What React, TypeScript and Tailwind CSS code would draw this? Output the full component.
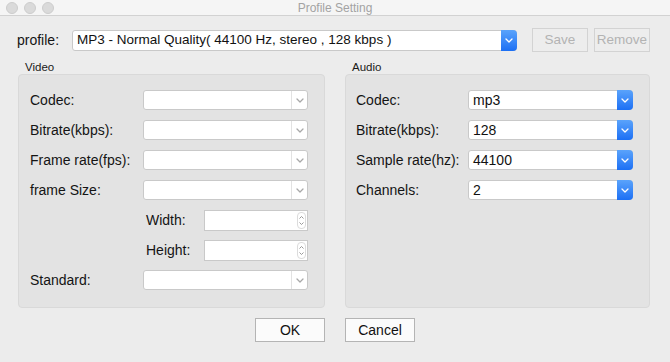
import React from 'react';

const FONT = { fontFamily: '"Liberation Sans", Arial, sans-serif' };

function Chevron({ color }: { color: string }) {
  return (
    <svg width="8" height="5" viewBox="0 0 8 5" fill="none">
      <polyline points="1,1 4,4 7,1" stroke={color} strokeWidth="1.3" strokeLinecap="round" strokeLinejoin="round" />
    </svg>
  );
}

function Select({ value, active, width }: { value?: string; active?: boolean; width: string }) {
  return (
    <div className={`${width} flex h-[20px] items-stretch rounded-[3px] border border-[#c9c9c9] bg-white`}>
      <div className="flex flex-1 items-center overflow-hidden pl-[4px] text-[14px] text-[#111]">{value}</div>
      {active ? (
        <div className="-my-px -mr-px flex w-[16px] items-center justify-center rounded-r-[4px] bg-gradient-to-b from-[#5aa3fb] to-[#1b6ff4]">
          <Chevron color="#ffffff" />
        </div>
      ) : (
        <div className="flex w-[16px] items-center justify-center border-l border-[#e2e2e2]">
          <Chevron color="#a8a8a8" />
        </div>
      )}
    </div>
  );
}

function Spin() {
  return (
    <div className="flex h-[21px] w-[104px] items-center justify-end border border-[#c9c9c9] bg-white pr-[1px]">
      <div className="flex h-[17px] w-[9px] flex-col items-center justify-center gap-[3px] rounded-[4px] border border-[#dcdcdc]">
        <svg width="5" height="3" viewBox="0 0 5 3" fill="none">
          <polyline points="0.5,2.5 2.5,0.5 4.5,2.5" stroke="#999" strokeWidth="1" />
        </svg>
        <svg width="5" height="3" viewBox="0 0 5 3" fill="none">
          <polyline points="0.5,0.5 2.5,2.5 4.5,0.5" stroke="#999" strokeWidth="1" />
        </svg>
      </div>
    </div>
  );
}

function Row({ label, children, labelWidth }: { label: string; children: React.ReactNode; labelWidth: string }) {
  return (
    <div className="flex h-[20px] items-center">
      <div className={`${labelWidth} text-[14px] text-[#141414]`}>{label}</div>
      {children}
    </div>
  );
}

export default function App() {
  return (
    <div className="flex h-[362px] w-[670px] flex-col overflow-hidden bg-[#ececec]" style={FONT}>
      {/* title bar */}
      <div className="grid h-[16px] grid-cols-[1fr_auto_1fr] items-center border-b border-[#d2d2d2] bg-[#f5f5f5]">
        <div className="flex gap-[6px] pl-[6px]">
          <span className="h-[12px] w-[12px] rounded-full border border-[#cdcdcd] bg-[#dadada]" />
          <span className="h-[12px] w-[12px] rounded-full border border-[#cdcdcd] bg-[#dadada]" />
          <span className="h-[12px] w-[12px] rounded-full border border-[#cdcdcd] bg-[#dadada]" />
        </div>
        <div className="text-[12px] leading-none text-[#a3a3a3]">Profile Setting</div>
        <div />
      </div>

      {/* profile row */}
      <div className="mt-[12px] flex h-[24px] items-center pl-[17px]">
        <div className="w-[55px] text-[14px] text-[#141414]">profile:</div>
        <div className="flex h-[21px] w-[445px] items-stretch rounded-[3px] border border-[#c9c9c9] bg-white">
          <div className="flex flex-1 items-center pl-[4px] text-[13.5px] text-[#111]">
            MP3 - Normal Quality( 44100 Hz, stereo , 128 kbps )
          </div>
          <div className="-my-px -mr-px flex w-[16px] items-center justify-center rounded-r-[4px] bg-gradient-to-b from-[#5aa3fb] to-[#1b6ff4]">
            <Chevron color="#ffffff" />
          </div>
        </div>
        <button className="ml-[15px] h-[24px] w-[56px] border border-[#d3d3d3] bg-[#ededed] text-[13.5px] text-[#b3b3b3]">Save</button>
        <button className="ml-[6px] h-[24px] w-[56px] border border-[#d3d3d3] bg-[#ededed] text-[13.5px] text-[#b3b3b3]">Remove</button>
      </div>

      {/* groups */}
      <div className="mt-[8px] flex gap-[20px] pl-[18px]">
        <div className="flex w-[307px] flex-col">
          <div className="h-[14px] pl-[7px] text-[11.5px] leading-[14px] text-[#1a1a1a]">Video</div>
          <div className="flex h-[234px] flex-col gap-[10px] rounded-[4px] border border-[#d9d9d9] bg-[#e3e3e3] pl-[11px] pt-[15px]">
            <Row label="Codec:" labelWidth="w-[113px]"><Select width="w-[165px]" /></Row>
            <Row label="Bitrate(kbps):" labelWidth="w-[113px]"><Select width="w-[165px]" /></Row>
            <Row label="Frame rate(fps):" labelWidth="w-[113px]"><Select width="w-[165px]" /></Row>
            <Row label="frame Size:" labelWidth="w-[113px]"><Select width="w-[165px]" /></Row>
            <div className="flex h-[20px] items-center pl-[116px]">
              <div className="w-[58px] text-[14px] text-[#141414]">Width:</div>
              <Spin />
            </div>
            <div className="flex h-[20px] items-center pl-[116px]">
              <div className="w-[58px] text-[14px] text-[#141414]">Height:</div>
              <Spin />
            </div>
            <Row label="Standard:" labelWidth="w-[113px]"><Select width="w-[165px]" /></Row>
          </div>
        </div>

        <div className="flex w-[305px] flex-col">
          <div className="h-[14px] pl-[7px] text-[11.5px] leading-[14px] text-[#1a1a1a]">Audio</div>
          <div className="flex h-[234px] flex-col gap-[10px] rounded-[4px] border border-[#d9d9d9] bg-[#e3e3e3] pl-[10px] pt-[15px]">
            <Row label="Codec:" labelWidth="w-[112px]"><Select width="w-[165px]" value="mp3" active /></Row>
            <Row label="Bitrate(kbps):" labelWidth="w-[112px]"><Select width="w-[165px]" value="128" active /></Row>
            <Row label="Sample rate(hz):" labelWidth="w-[112px]"><Select width="w-[165px]" value="44100" active /></Row>
            <Row label="Channels:" labelWidth="w-[112px]"><Select width="w-[165px]" value="2" active /></Row>
          </div>
        </div>
      </div>

      {/* footer buttons */}
      <div className="mt-[10px] flex justify-center gap-[20px]">
        <button className="h-[24px] w-[70px] border border-[#b4b4b4] bg-[#fbfbfb] text-[14px] text-[#111]">OK</button>
        <button className="h-[24px] w-[70px] border border-[#b4b4b4] bg-[#fbfbfb] text-[14px] text-[#111]">Cancel</button>
      </div>
    </div>
  );
}
